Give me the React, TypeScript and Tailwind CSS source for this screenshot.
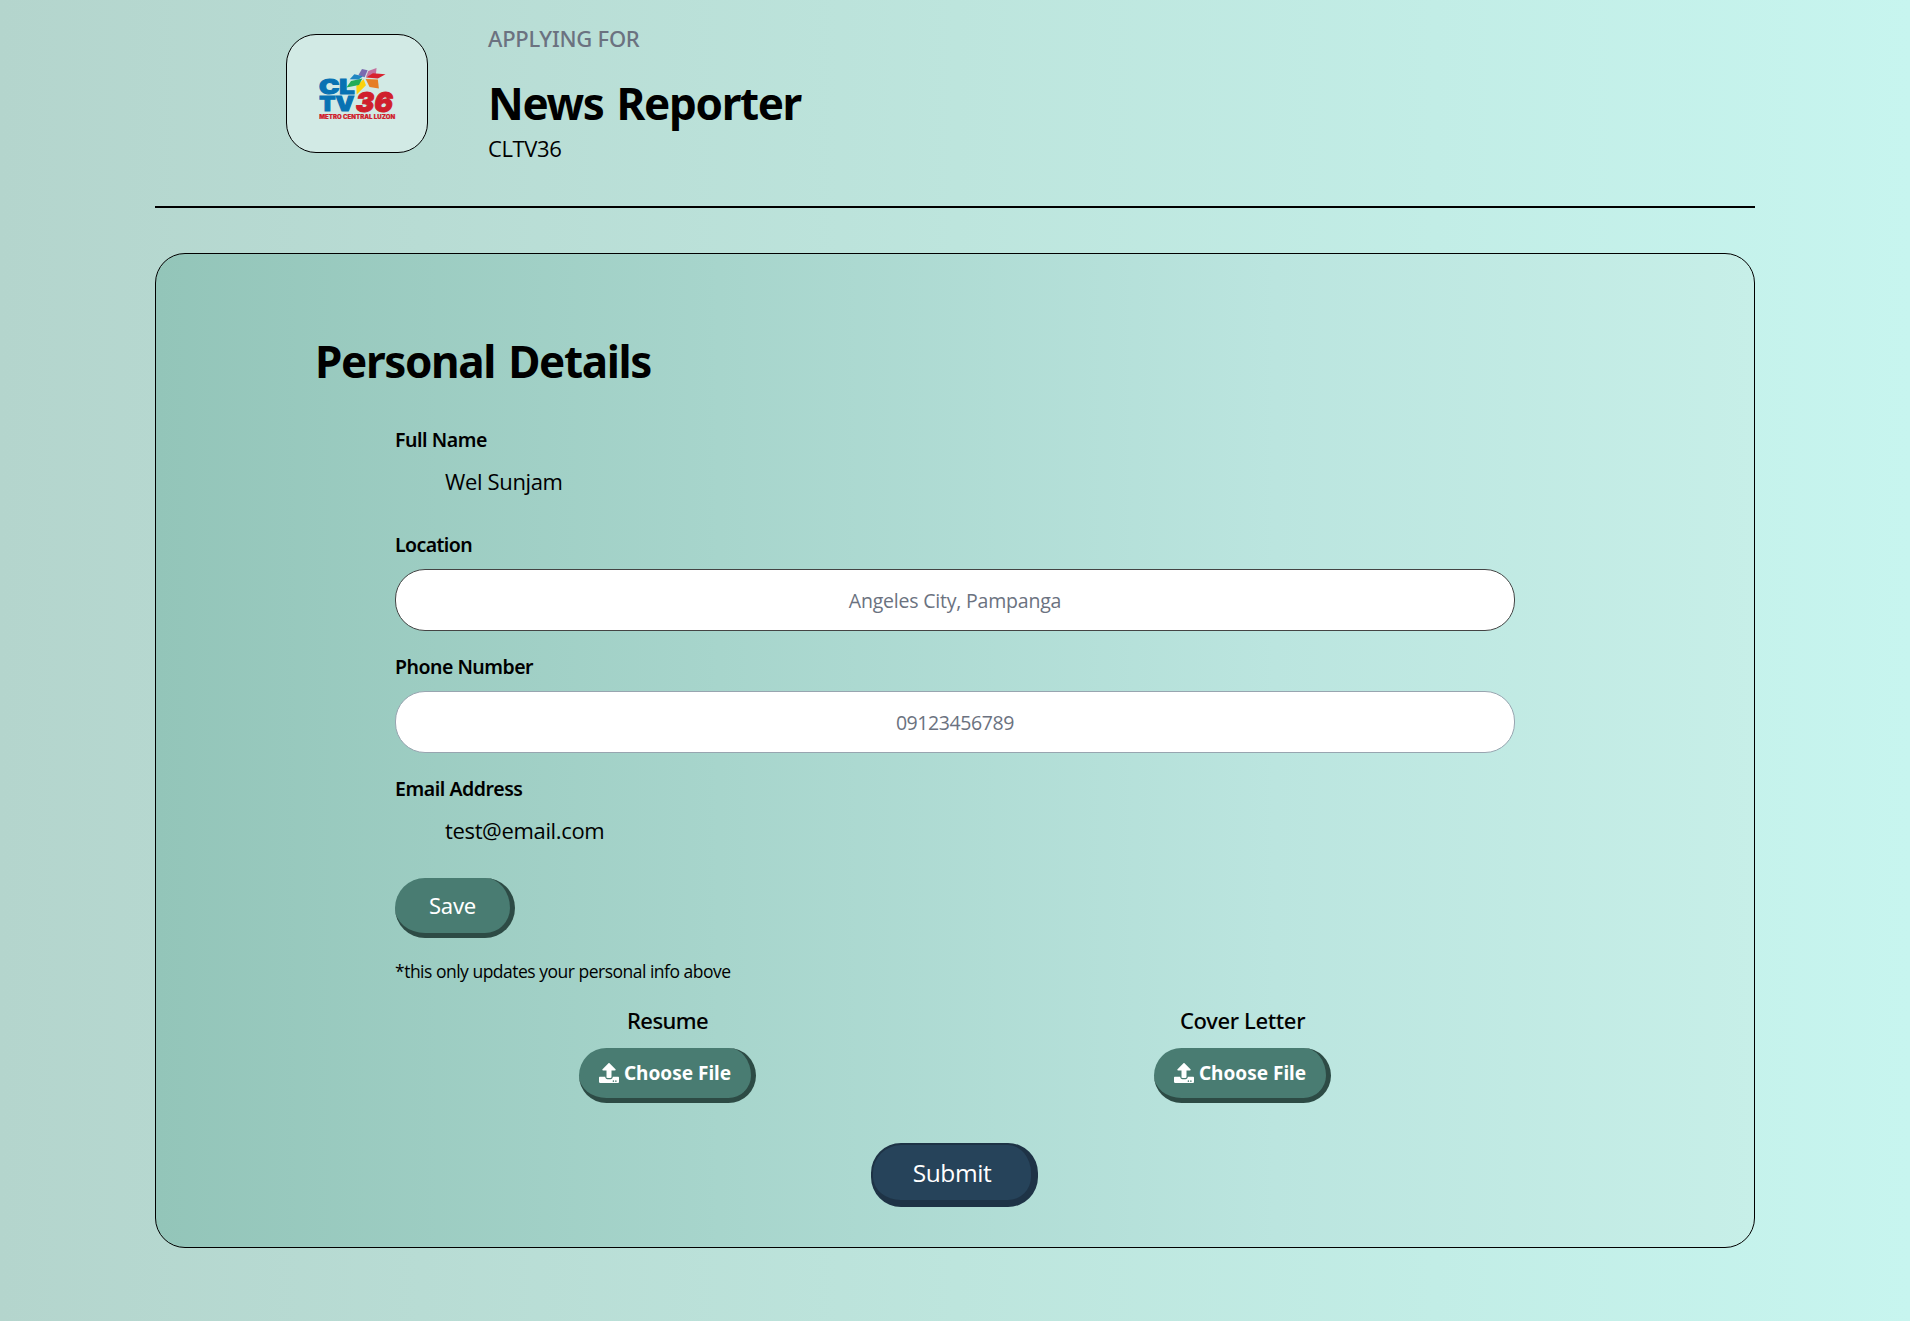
import { FaUpload } from 'react-icons/fa'

function Logo() {
  return (
    <svg viewBox="26 20 231 160" className="h-[53px] w-[77px]" fontFamily="Inter, sans-serif">
      <polygon points="155,26 172,30 163,51 144,45" fill="#7a6bb0" />
      <polygon points="199,23 197,42 167,50 174,32" fill="#c4719f" />
      <polygon points="226,42 203,55 167,52 188,39" fill="#d8232f" />
      <polygon points="203,58 206,85 178,80 166,56" fill="#e67e25" />
      <g fontWeight="900" fill="#0872b3" stroke="#0872b3" strokeWidth="3">
        <text x="25" y="101" fontSize="61" textLength="108" lengthAdjust="spacingAndGlyphs">CL</text>
        <text x="26" y="154" fontSize="60" textLength="106" lengthAdjust="spacingAndGlyphs">TV</text>
      </g>
      <polygon points="160,57 167,75 139,103 138,77" fill="#fbd20b" />
      <polygon points="156,55 146,74 108,82 122,62" fill="#22ac58" />
      <polygon points="132,42 158,48 145,58 118,57" fill="#1f86c2" />
      <g fontWeight="900" fill="#d0202c" stroke="#d0202c">
        <text x="136" y="155" fontSize="84" strokeWidth="3" fontStyle="italic" textLength="112" lengthAdjust="spacingAndGlyphs">36</text>
        <text x="26" y="178" fontSize="17" strokeWidth="0.5" textLength="229" lengthAdjust="spacingAndGlyphs">METRO CENTRAL LUZON</text>
      </g>
    </svg>
  )
}

function Upload({ title, tracking }: { title: string; tracking: string }) {
  return (
    <div className="flex flex-col items-center">
      <div className={`text-[22px] leading-[30px] font-medium ${tracking}`}>{title}</div>
      <button className="mt-[13px] flex h-[55px] w-[177px] items-center justify-center gap-[5px] rounded-[30px] border-r-[5px] border-b-[5px] border-[#2d4b45] bg-[#497c72] text-[19px] font-bold text-white">
        <FaUpload className="size-5" />
        <span className="pt-px">Choose File</span>
      </button>
    </div>
  )
}

const label = 'text-[19.5px] leading-[30px] font-semibold'
const value = "mt-[11px] pl-[50px] text-[22px] leading-[30px] tracking-[-0.35px] font-['Open_Sans',sans-serif]"
const input =
  "mt-[9px] block h-[62px] w-full rounded-[30px] border bg-white text-center text-[19.5px] text-[#6b7280] placeholder:text-[#6b7280] placeholder:opacity-100 font-['Open_Sans',sans-serif]"

export default function App() {
  return (
    <div className="h-[1321px] w-full overflow-hidden bg-linear-to-r from-[#b4d5cd] via-[#bde5dd] via-50% to-[#c7f5ef] font-['Noto_Sans',sans-serif] text-black">
      <div className="mx-auto w-[1600px]">
        <header className="flex h-[208px] border-b-2 border-black pl-[131px]">
          <div className="mt-[34px] flex h-[119px] w-[142px] items-center justify-center rounded-[30px] border border-black bg-[#d2eae5]">
            <Logo />
          </div>
          <div className="ml-[60px] pt-[23px]">
            <div className="text-[22px] leading-[30px] font-medium tracking-[-0.25px] text-[#6b7280]">APPLYING FOR</div>
            <h1 className="mt-[23px] text-[44px] leading-[54px] font-bold tracking-[-1.35px] [word-spacing:3px]">News Reporter</h1>
            <div className="mt-[3px] font-['Open_Sans',sans-serif] text-[22px] leading-[30px] tracking-[-0.4px]">CLTV36</div>
          </div>
        </header>

        <main className="mt-[45px] h-[995px] rounded-[30px] border border-black bg-linear-to-r from-[#93c5b9] via-[#bbe5df] via-70% to-[#c7efe8] pt-[80px]">
          <h2 className="pl-[159px] text-[44px] leading-[54px] font-bold tracking-[-1.35px] [word-spacing:3px]">Personal Details</h2>
          <form className="mx-auto mt-[37px] w-[1120px]">
            <div className={`${label} tracking-[-0.45px]`}>Full Name</div>
            <div className={value}>Wel Sunjam</div>

            <div className={`mt-[34px] ${label} tracking-[-0.6px]`}>Location</div>
            <input className={`${input} border-[#444444] tracking-[-0.2px]`} placeholder="Angeles City, Pampanga" />

            <div className={`mt-[21px] ${label} tracking-[-0.5px]`}>Phone Number</div>
            <input className={`${input} border-[#98a5b0] tracking-[-0.4px]`} placeholder="09123456789" />

            <div className={`mt-[21px] ${label} tracking-[-0.45px]`}>Email Address</div>
            <div className={value}>test@email.com</div>

            <button className="mt-[33px] block h-[60px] w-[120px] rounded-[30px] border-r-[5px] border-b-[5px] border-[#2d4b45] bg-[#497c72] text-[22px] tracking-[-0.3px] text-white">
              Save
            </button>
            <p className="mt-[20px] font-['Open_Sans',sans-serif] text-[17.5px] leading-[26px] tracking-[-0.5px]">
              *this only updates your personal info above
            </p>

            <div className="-mx-[15px] mt-[21px] grid grid-cols-2">
              <Upload title="Resume" tracking="tracking-[-0.6px]" />
              <Upload title="Cover Letter" tracking="tracking-[-0.35px]" />
            </div>
            <button className="mt-[40px] ml-[476px] block h-[64px] w-[167px] rounded-[30px] border-2 border-r-[7px] border-b-[7px] border-[#1e3346] bg-[#26435a] pt-[2px] font-['Open_Sans',sans-serif] text-[24.5px] tracking-[-0.4px] text-white">
              Submit
            </button>
          </form>
        </main>
      </div>
    </div>
  )
}
